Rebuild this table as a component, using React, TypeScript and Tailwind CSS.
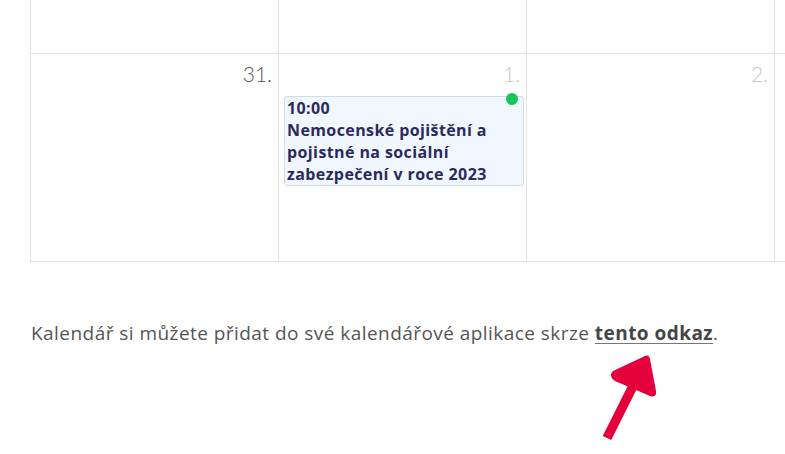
import React from 'react';

const cellBorder = 'border-r border-[#e3e3e3]';

function DayCell({ day, muted, children }: { day?: string; muted?: boolean; children?: React.ReactNode }) {
  return (
    <div className={`relative w-[248px] shrink-0 h-full ${cellBorder} px-[6px] pt-[6px]`}>
      {day && (
        <div
          className={`text-right font-['Lato',sans-serif] text-[21px] font-light leading-[28px] ${
            muted ? 'text-[#c8c8c8]' : 'text-[#555555]'
          }`}
        >
          {day}
        </div>
      )}
      {children}
    </div>
  );
}

export default function App() {
  return (
    <div className="relative w-[785px] h-[454px] overflow-hidden bg-white font-['Open_Sans','Noto_Sans',sans-serif]">
      <div className="ml-[30px] w-[1000px] border-l border-[#e3e3e3]">
        {/* previous week row, cut off at the top */}
        <div className="flex h-[54px] border-b border-[#e3e3e3]">
          <DayCell />
          <DayCell />
          <DayCell />
          <DayCell />
        </div>
        <div className="flex h-[208px] border-b border-[#e3e3e3]">
          <DayCell day="31." />
          <DayCell day="1." muted>
            <div className="relative mt-[8px] -ml-[1px] w-[240px] rounded-[3px] border border-[#cfd9ea] bg-[#f0f7fe] px-[2px] text-[16px] font-bold leading-[22px] tracking-[0.4px] text-[#2b2a5e]">
              <div>10:00</div>
              <div>Nemocenské pojištění a pojistné na sociální zabezpečení v roce 2023</div>
              <span className="absolute -top-[4px] right-[5px] h-[12px] w-[12px] rounded-full bg-[#16c55a]" />
            </div>
          </DayCell>
          <DayCell day="2." muted />
          <DayCell />
        </div>
      </div>

      <p className="mt-[59px] ml-[31px] text-[19px] leading-[24px] tracking-[0.45px] text-[#555555]">
        Kalendář si můžete přidat do své kalendářové aplikace skrze{' '}
        <a className="font-bold text-[#444444] underline decoration-[#777777] underline-offset-[3px]">tento odkaz</a>.
      </p>

      <svg className="absolute left-[595px] top-[350px]" width="70" height="96" viewBox="595 350 70 96">
        <line x1="607" y1="438" x2="634" y2="384" stroke="#e4003a" strokeWidth="9.5" />
        <path
          d="M613 371 L645 356 Q649 354 650 359 L656 391 Q657 398 650 396 L615 381 Q608 376 613 371 Z"
          fill="#e4003a"
        />
      </svg>
    </div>
  );
}
